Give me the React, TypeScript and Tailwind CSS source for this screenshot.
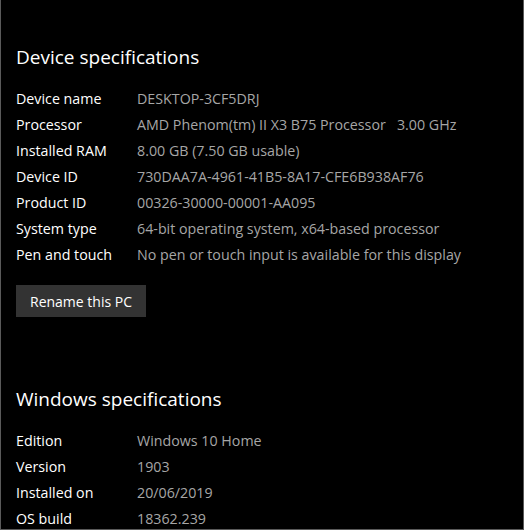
const device = [
  ["Device name", "DESKTOP-3CF5DRJ"],
  ["Processor", "AMD Phenom(tm) II X3 B75 Processor\u00a0\u00a0\u00a03.00 GHz"],
  ["Installed RAM", "8.00 GB (7.50 GB usable)"],
  ["Device ID", "730DAA7A-4961-41B5-8A17-CFE6B938AF76"],
  ["Product ID", "00326-30000-00001-AA095"],
  ["System type", "64-bit operating system, x64-based processor"],
  ["Pen and touch", "No pen or touch input is available for this display"],
];

const windows = [
  ["Edition", "Windows 10 Home"],
  ["Version", "1903"],
  ["Installed on", "20/06/2019"],
  ["OS build", "18362.239"],
];

function SpecRows({ rows }: { rows: string[][] }) {
  return (
    <div className="flex flex-col">
      {rows.map(([label, value]) => (
        <div key={label} className="flex h-[26px] items-center text-[14.25px]">
          <div className="w-[121px] shrink-0 text-white">{label}</div>
          <div className="whitespace-nowrap text-[#a6a6a6]">{value}</div>
        </div>
      ))}
    </div>
  );
}

export default function App() {
  return (
    <div
      className="h-[530px] w-[524px] overflow-hidden border-x border-b border-[#5a5a5a] bg-black pl-[15px]"
      style={{ fontFamily: '"Segoe UI", "Open Sans", "Noto Sans", sans-serif' }}
    >
      <h2 className="mt-[42px] text-[19px] leading-[30px] text-white">Device specifications</h2>
      <div className="mt-[14px]">
        <SpecRows rows={device} />
      </div>
      <button className="mt-[17px] h-[32px] bg-[#333333] px-[14px] text-[14px] text-white">
        Rename this PC
      </button>
      <h2 className="mt-[67px] text-[19px] leading-[30px] text-white">Windows specifications</h2>
      <div className="mt-[14px]">
        <SpecRows rows={windows} />
      </div>
    </div>
  );
}
